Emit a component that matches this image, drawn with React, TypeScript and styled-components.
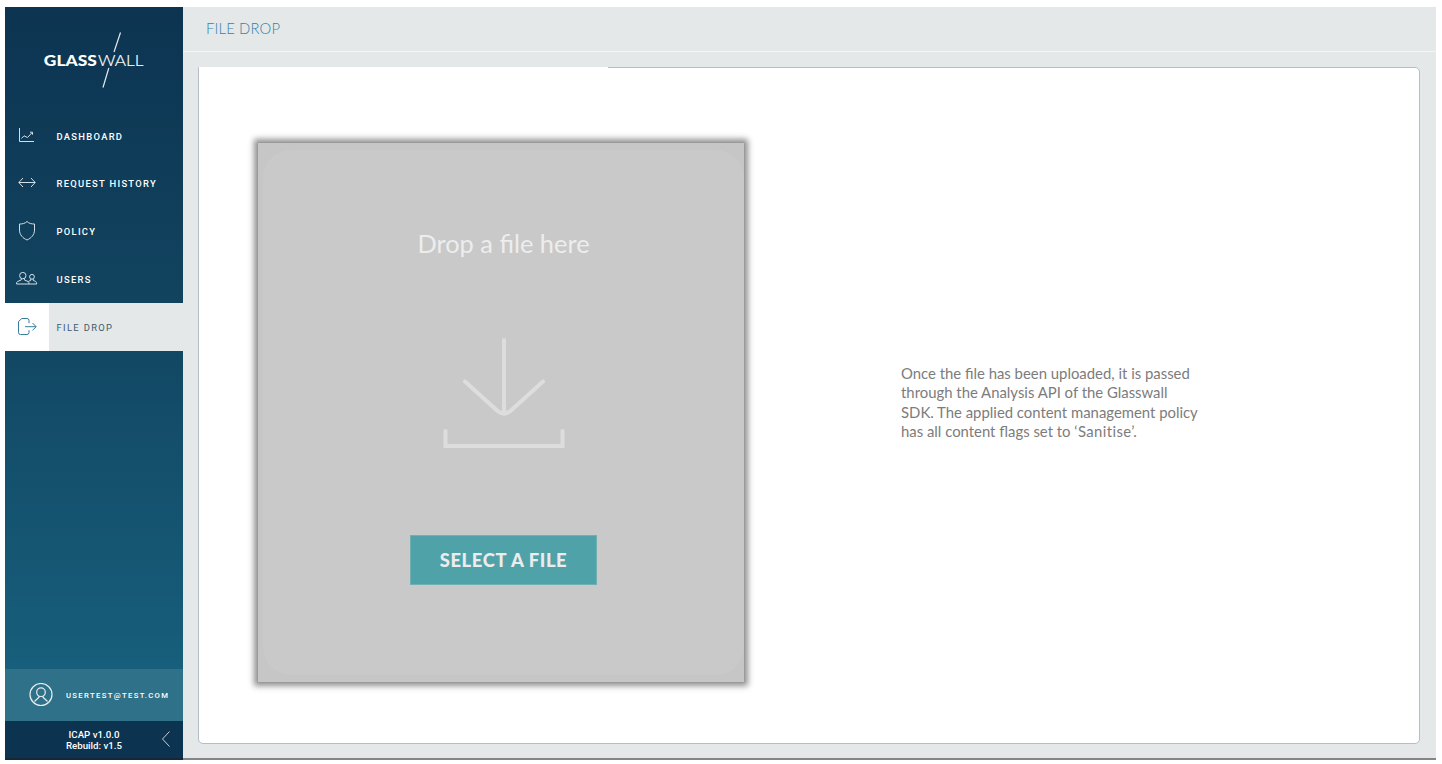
import React from "react";
import styled, { createGlobalStyle } from "styled-components";

const GlobalStyle = createGlobalStyle`
  *, *::before, *::after { box-sizing: border-box; }
  body { margin: 0; background: #fff; overflow: hidden; }
`;

const Page = styled.div`
  width: 1442px;
  height: 764px;
  padding: 7px 6px 4px 5px;
`;

const Shell = styled.div`
  display: flex;
  height: 753px;
  background: #e4e8e9;
`;

const Sidebar = styled.aside`
  display: flex;
  flex-direction: column;
  width: 178px;
  flex: none;
  background: linear-gradient(180deg, #0c3451 0%, #11435f 38%, #17607d 90%);
  font-family: Roboto, "Liberation Sans", sans-serif;
  color: #fff;
`;

const Brand = styled.div`
  height: 105px;
  flex: none;
`;

const Nav = styled.nav`
  flex: 1;
`;

const NavItem = styled.a<{ $active?: boolean }>`
  display: flex;
  align-items: center;
  height: 47.75px;
  background: ${(p) => (p.$active ? "#e4e8e9" : "transparent")};
  color: ${(p) => (p.$active ? "#405a6c" : "#fff")};
  font-size: 9.4px;
  font-weight: ${(p) => (p.$active ? 400 : 500)};
  letter-spacing: ${(p) => (p.$active ? "1.35px" : "1.3px")};
  white-space: nowrap;
`;

const NavLabel = styled.span`
  padding-top: 0.5px;
`;

const NavIcon = styled.span<{ $active?: boolean }>`
  display: flex;
  align-items: center;
  justify-content: center;
  width: 44px;
  height: 100%;
  margin-right: 7.5px;
  background: ${(p) => (p.$active ? "#fff" : "transparent")};
  svg {
    fill: none;
    stroke: ${(p) => (p.$active ? "#367d9c" : "#d3dfe5")};
    stroke-width: 1;
  }
`;

const Account = styled.div`
  display: flex;
  align-items: center;
  gap: 13px;
  height: 52px;
  padding-left: 24px;
  background: #30718a;
  font-size: 7.7px;
  font-weight: 500;
  letter-spacing: 1.34px;
`;

const Version = styled.div`
  display: flex;
  align-items: center;
  justify-content: flex-end;
  height: 39px;
  padding: 0 12px 0 0;
  background: #0c3350;
  border-bottom: 2px solid #17273a;
  font-size: 9.7px;
  line-height: 11px;
  text-align: center;
  font-weight: 500;
`;

const Chevron = styled.svg`
  margin: 0 0 2px 39px;
`;

const Main = styled.main`
  display: flex;
  flex-direction: column;
  flex: 1;
  border-bottom: 2px solid #858585;
`;

const Header = styled.header`
  height: 45px;
  padding: 12px 0 0 23px;
  border-bottom: 1px solid #f4f6f6;
  color: #3484a6;
  font: 300 14.8px/19px Lato, "Open Sans", sans-serif;
  letter-spacing: 0.15px;
`;

const Panel = styled.section`
  position: relative;
  display: flex;
  width: 1222px;
  height: 677px;
  margin: 15px 0 0 15px;
  padding: 75px 0 0 59px;
  border: 1px solid #b4bdc8;
  border-radius: 0 5px 5px 5px;
  background: #fff;
  &::before {
    content: "";
    position: absolute;
    top: -1px;
    left: 0;
    width: 409px;
    height: 2px;
    background: #fff;
  }
`;

const DropZone = styled.div`
  width: 486px;
  height: 539px;
  background: #c6c6c6;
  box-shadow: 0 0 0 1px rgba(0, 0, 0, 0.03), 0 0 6px 4px rgba(0, 0, 0, 0.43);
`;

const DropArea = styled.div`
  display: flex;
  flex-direction: column;
  align-items: center;
  width: 481px;
  height: 525px;
  margin: 7px 0 0 5px;
  padding-top: 76px;
  border-radius: 28px;
  background: #c9c9c9;
`;

const DropTitle = styled.div`
  color: #ededed;
  font: 400 25.4px/34px Lato, "Open Sans", sans-serif;
  white-space: nowrap;
`;

const DownloadIcon = styled.svg`
  margin-top: 76px;
`;

const SelectButton = styled.button`
  width: 187px;
  height: 50px;
  margin-top: 85px;
  padding: 0;
  border: 1px solid #6fb0b5;
  background: #50a2a9;
  color: #ececec;
  font: 900 18.4px/48px Lato, "Open Sans", sans-serif;
  letter-spacing: 0.6px;
  white-space: nowrap;
`;

const Description = styled.p`
  width: 320px;
  margin: 221px 0 0 157px;
  color: #7c7c7c;
  font: 400 14.88px/19.4px Lato, "Open Sans", sans-serif;
  white-space: nowrap;
`;

const Flag = styled.span`
  font-variant-ligatures: none;
  letter-spacing: 0.4px;
`;

const Logo = () => (
  <svg width="178" height="105" viewBox="0 0 178 105">
    <g fill="#fff" fontFamily="Lato, 'Open Sans', sans-serif">
      <text x="38.800" y="59" fontSize="15.800" fontWeight="900" textLength="53" lengthAdjust="spacingAndGlyphs">GLASS</text>
      <text x="93" y="59" fontSize="15.800" fontWeight="300" textLength="45.500" lengthAdjust="spacingAndGlyphs" stroke="#fff" strokeWidth=".2">WALL</text>
    </g>
    <path d="M115.500 25.500L109 45M103.800 61L98 80.500" stroke="#e4eaee" strokeWidth="1.200" />
  </svg>
);

const ChartIcon = () => (
  <svg width="16" height="16" viewBox="0 0 16 16">
    <path d="M.5 0v13.500H15M2.500 10.500L5 7.800 8.500 9.500 13.200 4.500M11 4.200h2.500v2.500" />
  </svg>
);

const ArrowsIcon = () => (
  <svg width="18" height="12" viewBox="0 0 18 12">
    <path d="M1 4.500h16M5 0L.8 4.500 5 9M13 0l4.200 4.500L13 9" />
  </svg>
);

const ShieldIcon = () => (
  <svg width="18" height="20" viewBox="0 0 18 20">
    <path d="M9 .5C7 2.500 4.500 3 1.500 3V9c0 5 3.500 8.200 7.500 10 4-1.800 7.500-5 7.500-10V3C13.500 3 11 2.500 9 .5z" />
  </svg>
);

const UsersIcon = () => (
  <svg width="22" height="15" viewBox="0 0 22 15">
    <circle cx="6.800" cy="3.600" r="3.200" />
    <path d="M5.200 6.500v1.500L1.500 9.500Q.5 10.200.5 12H13Q13 10.200 12.100 9.500L8.400 8V6.500" />
    <circle cx="16" cy="4.800" r="2.400" />
    <path d="M14.800 7v1.300l-2.500 1.200M17.200 7v1.300l2.500 1.200Q20.700 10.200 20.700 12H13" />
  </svg>
);

const ExitIcon = () => (
  <svg width="20" height="18" viewBox="0 0 20 18">
    <path d="M12 5.200V2.500Q12 .5 10 .5H4.800L1.500 3.500V14.500Q1.500 16.500 3.500 16.500H10q2 0 2-2V12.200M8 8.700h11M15.500 5L19.200 8.700l-3.700 3.700" />
  </svg>
);

const AvatarIcon = () => (
  <svg width="24" height="24" viewBox="0 0 24 24" fill="none" stroke="#e5eef1" strokeWidth="1.200">
    <circle cx="12" cy="11.500" r="11" />
    <circle cx="12" cy="9.200" r="4.300" />
    <path d="M10 13v1.200L5.500 18.500M14 13v1.200l4.500 4.300" />
  </svg>
);

const items = [
  { label: "DASHBOARD", icon: <ChartIcon /> },
  { label: "REQUEST HISTORY", icon: <ArrowsIcon /> },
  { label: "POLICY", icon: <ShieldIcon /> },
  { label: "USERS", icon: <UsersIcon /> },
  { label: "FILE DROP", icon: <ExitIcon />, active: true },
];

export default function App() {
  return (
    <Page>
      <GlobalStyle />
      <Shell>
        <Sidebar>
          <Brand><Logo /></Brand>
          <Nav>
            {items.map((item) => (
              <NavItem key={item.label} $active={item.active}>
                <NavIcon $active={item.active}>{item.icon}</NavIcon>
                <NavLabel>{item.label}</NavLabel>
              </NavItem>
            ))}
          </Nav>
          <Account>
            <AvatarIcon />
            USERTEST@TEST.COM
          </Account>
          <Version>
            <div>ICAP v1.0.0<br />Rebuild: v1.5</div>
            <Chevron width="10" height="18" viewBox="0 0 10 18" fill="none" stroke="#c6d1d9">
              <path d="M8.500 1.500L1.500 9l7 7.500" />
            </Chevron>
          </Version>
        </Sidebar>
        <Main>
          <Header>FILE DROP</Header>
          <Panel>
            <DropZone>
              <DropArea>
                <DropTitle>Drop a file here</DropTitle>
                <DownloadIcon width="122" height="114" viewBox="0 0 122 114" fill="none" stroke="#dddddd" strokeWidth="4" strokeLinecap="round">
                  <path d="M61 4v74M22 45.500L54 74.500Q61 80.500 68 74.500L100 45.500M2.500 95v15h117V95" />
                </DownloadIcon>
                <SelectButton>SELECT A FILE</SelectButton>
              </DropArea>
            </DropZone>
            <Description>
              Once the file has been uploaded, it is passed<br />
              through the Analysis API of the Glasswall<br />
              SDK. The applied content management policy<br />
              has all content flags set to <Flag>‘Sanitise’.</Flag>
            </Description>
          </Panel>
        </Main>
      </Shell>
    </Page>
  );
}
